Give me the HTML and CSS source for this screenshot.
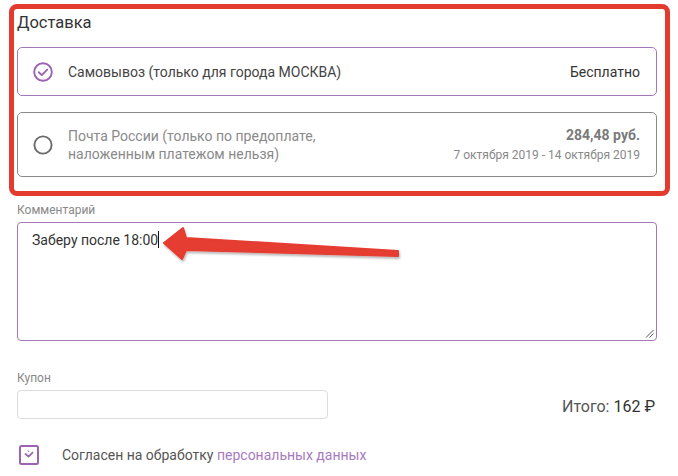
FILE: index.html
```html
<!DOCTYPE html>
<html lang="ru">
<head>
<meta charset="utf-8">
<title>Доставка</title>
<link rel="stylesheet" href="styles.css">
</head>
<body>
<div class="page">
  <section class="delivery">
    <h2 class="delivery-title">Доставка</h2>
    <div class="options">
      <div class="option option-active">
        <svg class="radio" viewBox="0 0 20 20" width="20" height="20">
          <circle cx="10" cy="10" r="8.8" fill="none" stroke="#9d63b3" stroke-width="1.9"/>
          <path d="M5.8 10.2 L8.8 13.1 L14.2 7.6" fill="none" stroke="#9d63b3" stroke-width="1.9" stroke-linecap="round" stroke-linejoin="round"/>
        </svg>
        <div class="option-name">Самовывоз (только для города МОСКВА)</div>
        <div class="option-price">Бесплатно</div>
      </div>
      <div class="option option-muted">
        <svg class="radio" viewBox="0 0 20 20" width="20" height="20">
          <circle cx="10" cy="10" r="8.6" fill="none" stroke="#6b6b6b" stroke-width="1.9"/>
        </svg>
        <div class="option-name">Почта России (только по предоплате,<br>наложенным платежом нельзя)</div>
        <div class="option-meta">
          <div class="meta-price">284,48 руб.</div>
          <div class="meta-dates">7 октября 2019 - 14 октября 2019</div>
        </div>
      </div>
    </div>
  </section>

  <div class="form">
    <div class="field-label">Комментарий</div>
    <div class="textarea">Заберу после 18:00<span class="caret"></span>
      <svg class="grip" viewBox="0 0 9 9" width="9" height="9">
        <path d="M1 8.5 L8.5 1 M4.5 8.5 L8.5 4.5" stroke="#555" stroke-width="1"/>
      </svg>
    </div>

    <div class="field-label coupon-label">Купон</div>
    <div class="coupon-row">
      <div class="input"></div>
      <div class="total">Итого: <span class="total-sum">162 ₽</span></div>
    </div>

    <div class="agree">
      <svg class="checkbox" viewBox="0 0 20 20" width="20" height="20">
        <rect x="1" y="1" width="18" height="18" rx="1.5" fill="none" stroke="#9d63b3" stroke-width="2"/>
        <path d="M6.5 9 L9.5 11.6 L13.6 7.6" fill="none" stroke="#9d63b3" stroke-width="1.7" stroke-linecap="round" stroke-linejoin="round"/>
        <path d="M9.5 5.6 L9.5 6.8" stroke="#9d63b3" stroke-width="1.4"/>
      </svg>
      <span class="agree-text">Согласен на обработку <a class="agree-link" href="#">персональных данных</a></span>
    </div>
  </div>

  <svg class="arrow" viewBox="0 0 678 476" width="678" height="476">
    <defs>
      <filter id="sh" x="-10%" y="-50%" width="120%" height="200%">
        <feDropShadow dx="1" dy="2" stdDeviation="0.8" flood-color="#000" flood-opacity="0.28"/>
      </filter>
    </defs>
    <polygon points="164,243 183,228 186,238 398,251 398,256 186,250 182,259"
             fill="#e53c30" stroke="#e53c30" stroke-width="2" stroke-linejoin="round" filter="url(#sh)"/>
  </svg>
</div>
</body>
</html>
```

FILE: styles.css
```css
* {
  box-sizing: border-box;
}

html, body {
  margin: 0;
  padding: 0;
  background: #fff;
}

body {
  font-family: Roboto, "Noto Sans", "Liberation Sans", sans-serif;
  color: #444;
  font-size: 14px;
}

.page {
  position: relative;
  width: 678px;
  height: 476px;
  overflow: hidden;
}

.delivery {
  margin: 4px 8px 0 9px;
  border: 5px solid #e43b2f;
  border-radius: 8px;
  padding: 3px 8px 14px 3px;
}

.delivery-title {
  margin: 0 0 13px 0;
  font-size: 16.5px;
  line-height: 22px;
  font-weight: 400;
  color: #333;
}

.options {
  display: flex;
  flex-direction: column;
  gap: 16px;
}

.option {
  display: flex;
  align-items: center;
  border: 1px solid #888;
  border-radius: 5px;
  padding: 0 16px 0 15px;
}

.option-active {
  height: 49px;
  border-color: #a477b9;
  color: #444;
}

.option-muted {
  height: 65px;
  border-color: #8a8a8a;
  color: #8a8a8a;
}

.radio {
  flex: none;
  display: block;
  margin-right: 15px;
}

.option-name {
  flex: 1;
  line-height: 18px;
}

.option-price {
  color: #333;
}

.option-meta {
  text-align: right;
}

.meta-price {
  font-weight: 700;
  color: #7a7a7a;
  line-height: 18px;
}

.meta-dates {
  font-size: 12px;
  line-height: 18px;
  margin-top: 2px;
  color: #888;
}

.form {
  margin-left: 17px;
  width: 640px;
}

.field-label {
  font-size: 12px;
  line-height: 15px;
  color: #888;
  margin: 7px 0 4px;
}

.textarea {
  position: relative;
  height: 119px;
  border: 1px solid #a477b9;
  border-radius: 4px;
  padding: 7px 14px;
  line-height: 20px;
  color: #333;
}

.caret {
  display: inline-block;
  width: 1px;
  height: 17px;
  background: #111;
  vertical-align: -3px;
}

.grip {
  position: absolute;
  right: 2px;
  bottom: 2px;
}

.coupon-label {
  margin-top: 30px;
  margin-bottom: 4px;
}

.coupon-row {
  display: flex;
  align-items: center;
  justify-content: space-between;
  padding-right: 2px;
}

.input {
  width: 311px;
  height: 29px;
  border: 1px solid #dcdcdc;
  border-radius: 4px;
}

.total {
  font-size: 16px;
  color: #555;
  margin-top: 4px;
}

.total-sum {
  color: #333;
}

.agree {
  display: flex;
  align-items: center;
  margin-top: 26px;
  padding-left: 2px;
}

.checkbox {
  display: block;
  flex: none;
  margin-right: 23px;
}

.agree-text {
  color: #555;
  line-height: 20px;
}

.agree-link {
  color: #a77abf;
  text-decoration: none;
}

.arrow {
  position: absolute;
  left: 0;
  top: 0;
  pointer-events: none;
}
```
